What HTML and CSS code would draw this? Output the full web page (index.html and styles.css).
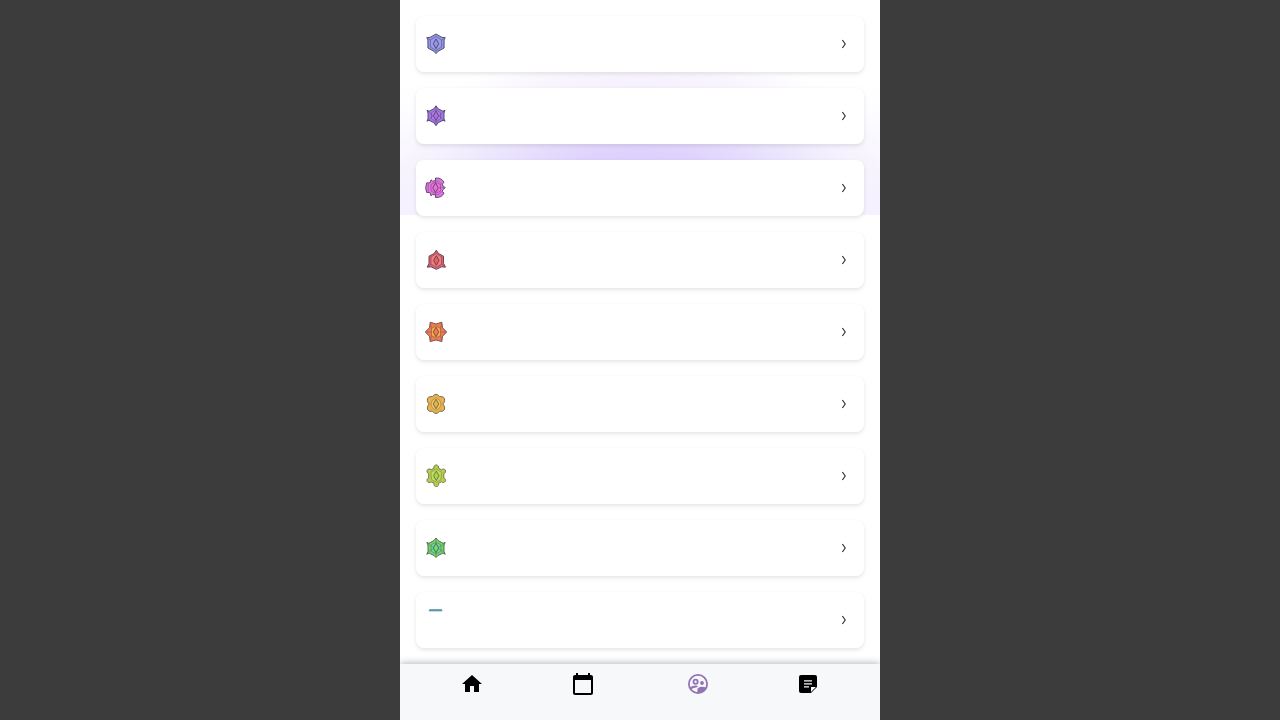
FILE: index.html
```html
<!DOCTYPE html>
<html lang="en">
<head>
<meta charset="utf-8">
<title>Groups</title>
<link rel="stylesheet" href="styles.css">
</head>
<body>
<svg width="0" height="0" class="defs"><defs>
<path id="chev" d="M2.4 2 5.2 6 2.4 10"/>
<g id="gem"><path d="M12 7 14.7 11.7 12 16.6 9.3 11.7Z"/></g>
</defs></svg>
<div class="app">
<main class="list">
<a class="card"><svg class="badge indigo" viewBox="0 0 24 24"><path d="M12 2 18 5.4 21.2 5.5 20.1 8V16L14 19.3 12 21.6 10 19.3 3.9 16V8L2.8 5.5 6 5.4Z"/><path class="center" d="M12 4.7 17.5 8V15L12 18.3 6.5 15V8Z"/><path class="in" d="M4 6.5 6.5 8M20 6.5 17.5 8M12 18.3V20"/><use href="#gem"/></svg><svg class="chevron" viewBox="0 0 8 12"><use href="#chev"/></svg></a>
<a class="card"><svg class="badge violet" viewBox="0 0 24 24"><path d="M12 1.8 14 4.7 19 7.2 21 6.2 20 9V14.4L21 17.2 19 16.3 14 18.8 12 21.7 10 18.8 5 16.3 3 17.2 4 14.4V9L3 6.2 5 7.2 10 4.7Z"/><path class="center" d="M12 5.5 16.5 9V14.5L12 18 7.5 14.5V9Z"/><path class="in" d="M12 2V7M12 16.6V21M4 7 9.3 11.7 4 16.5M20 7 14.7 11.7 20 16.5"/><use href="#gem"/></svg><svg class="chevron" viewBox="0 0 8 12"><use href="#chev"/></svg></a>
<a class="card"><svg class="badge pink" viewBox="0 0 24 24"><path d="M11.5 4.5V2Q18 1.7 20 6.5L18.2 8 19 10 21.3 11.7 19 13.5 18.2 15.5 20 17Q18 21.8 11.5 21.5V19L8.7 18.4 7 19.8 6 16.6 2.7 16.5Q.6 11.8 2.7 6.9L6 6.8 7 3.8 8.7 5.2Z"/><path class="center" d="M11.5 6 16.5 8.5V15L11.5 17.5 7 15V8.5Z"/><path class="in" d="M11.5 4.5V7M11.5 17V19M4.2 8V15.5M11.5 4.5Q15 4.5 18 8M11.5 19Q15 19 18 15.5M15 11.7H20"/><use href="#gem" x="-.5"/></svg><svg class="chevron" viewBox="0 0 8 12"><use href="#chev"/></svg></a>
<a class="card"><svg class="badge red" viewBox="0 0 24 24"><path d="M12.3 2.2 14.5 5.5 19.5 8.2V15.3L21.5 19.2 17.7 18.8 12.3 21.3 7 18.8 3.2 19.2 5 15.3V8.2L10.1 5.5Z"/><path class="center" d="M12.3 5.5 17.5 9V16L12.3 19.2 7 16V9Z"/><path class="in" d="M7 16 4 18.5M17.5 16 20.5 18.5"/><use href="#gem" x=".3" y=".7"/></svg><svg class="chevron" viewBox="0 0 8 12"><use href="#chev"/></svg></a>
<a class="card"><svg class="badge orange" viewBox="0 0 24 24"><path d="M12 4 17.8 2.2 18.5 7.8 22.8 12 18.5 16.2 17.8 21.6 12 20 6.2 21.6 5.5 16.2 1.2 12 5.5 7.8 6.2 2.2Z"/><path class="center" d="M12 6 16.5 8.5V15.5L12 18 7.5 15.5V8.5Z"/><path class="in" d="M7.5 8.5 6.5 3.5M16.5 8.5 17.5 3.5M7.5 15.5 6.5 20.5M16.5 15.5 17.5 20.5M7.5 12H2M16.5 12H22"/><use href="#gem" y=".2"/></svg><svg class="chevron" viewBox="0 0 8 12"><use href="#chev"/></svg></a>
<a class="card"><svg class="badge gold" viewBox="0 0 24 24"><path d="M8.5 4.5Q12 0 15.5 4.5 21 4.2 20.7 8.5 20.5 10.5 18.8 12 21.5 14.5 20.5 17.5 19 20.2 15.5 19.2 12 24 8.5 19.2 5 20.2 3.5 17.5 2.5 14.5 5.2 12 3.5 10.5 3.3 8.5 3 4.2 8.5 4.5Z"/><path class="center" d="M12 5.5Q7 8 7 12T12 18.5Q17 16 17 12T12 5.5"/><use href="#gem" y=".2"/></svg><svg class="chevron" viewBox="0 0 8 12"><use href="#chev"/></svg></a>
<a class="card"><svg class="badge lime" viewBox="0 0 24 24"><path d="M10 4.2A2.4 2.4 0 1 1 14.5 4.2L17.5 5.8A2.3 2.3 0 1 1 19.8 9.5V14A2.3 2.3 0 1 1 17.5 17.7L14.5 19.3A2.4 2.4 0 1 1 10 19.3L7 17.7A2.3 2.3 0 1 1 4.7 14V9.5A2.3 2.3 0 1 1 7 5.8Z"/><path class="center" d="M12.3 5.2 17.5 8 17 15.5 12.3 18.3 7.5 15.5 7 8Z"/><use href="#gem" x=".3"/></svg><svg class="chevron" viewBox="0 0 8 12"><use href="#chev"/></svg></a>
<a class="card"><svg class="badge green" viewBox="0 0 24 24"><path d="M12 2 14 4.5 19 7.3 21.2 6.5 20 9V15.5L21.2 18.3 19 17 14 19.5 12 21.5 10 19.5 5 17 2.8 18.3 4 15.5V9L2.8 6.5 5 7.3 10 4.5Z"/><path class="center" d="M12 6 17 9V15L12 18 7 15V9Z"/><path class="in" d="M12 3V7M12 17V21M4 8 9 11M20 8 15 11M4 16 9 13M20 16 15 13"/><use href="#gem" y=".2"/></svg><svg class="chevron" viewBox="0 0 8 12"><use href="#chev"/></svg></a>
<a class="card"><svg class="badge teal" viewBox="0 0 24 24"><path d="M5.5 1.8H17.7L18 2.8H5.2Z"/></svg><svg class="chevron" viewBox="0 0 8 12"><use href="#chev"/></svg></a>
</main>
<nav class="tabs">
<a class="tab"><svg viewBox="0 0 24 24"><path d="M10 20v-6h4v6h5v-8h3L12 3 2 12h3v8z"/></svg></a>
<a class="tab"><svg viewBox="0 0 24 24"><path d="M20 3h-1V1h-2v2H7V1H5v2H4c-1.1 0-2 .9-2 2v16c0 1.1.9 2 2 2h16c1.1 0 2-.9 2-2V5c0-1.1-.9-2-2-2zm0 18H4V8h16v13z"/></svg></a>
<a class="tab active"><svg viewBox="0 0 24 24"><circle class="ring" cx="12" cy="12" r="9.1"/><circle class="ring" cx="9.6" cy="9.7" r="2.1"/><circle cx="16" cy="11" r="1.9"/><path d="M4 15.2Q6.3 13.6 9.8 13.6L12.3 14.1Q11 14.7 10.4 15.6 7.2 15.5 5.4 17.3ZM11.4 21V17.5Q12 14.7 16 14.7 18.5 14.7 20.4 16 18.3 21.2 11.4 21Z"/></svg></a>
<a class="tab"><svg viewBox="0 0 24 24"><path d="M5 3H19Q21 3 21 5V15L15 21H5Q3 21 3 19V5Q3 3 5 3Z"/><path class="fold" d="M15 19.9V15H19.9Z"/><path class="lines" d="M8 8.9H16M8 11.9H16M8 14.9H13"/></svg></a>
</nav>
</div>
</body>
</html>
```
FILE: styles.css
```css
body { margin: 0; background: #3c3c3c; overflow: hidden; font-family: Roboto, sans-serif; }
.defs { display: block; }
.app {
  width: 480px; height: 720px; margin: 0 auto;
  display: flex; flex-direction: column;
  background:
    radial-gradient(265px 155px at 240px 215px, #d2c2fb 0%, #dfd3fd 42%, #e9e2fd 62%, #f6f1fe 85%, rgba(255,255,255,0) 108%) 0 0 / 480px 215px no-repeat,
    linear-gradient(#fff 80px, #fafaff 155px, #f2f1fe 215px) 0 0 / 480px 215px no-repeat,
    #fff;
}
.list { flex: 1; padding: 16px 16px 0; display: flex; flex-direction: column; gap: 16px; box-sizing: border-box; }
.card {
  height: 56px; padding: 0 16px 0 8px; box-sizing: border-box;
  display: flex; align-items: center; justify-content: space-between;
  background: #fff; border-radius: 8px; box-shadow: 0 2px 4px rgba(0,0,0,.1);
}
.badge { width: 24px; height: 24px; stroke: #4c4b70; stroke-width: .95; stroke-linejoin: round; }
.badge .in { fill: none; stroke-width: .6; opacity: .75; }
.badge .center { stroke-width: .5; }
.chevron { width: 8px; height: 12px; fill: none; stroke: #333338; stroke-width: 1.2; }
.indigo { fill: #8f97e0; }
.indigo .center { fill: #a298f2; }
.violet { fill: #a873e6; }
.violet .center { fill: #c27af0; }
.pink { fill: #dc78e6; stroke: #69406c; }
.pink .center { fill: #ef70cf; }
.red { fill: #e0607a; stroke: #67404f; }
.red .center { fill: #f47e72; }
.orange { fill: #f07c4c; stroke: #784a55; }
.orange .center { fill: #f6ae48; }
.gold { fill: #eab04c; stroke: #74664e; }
.gold .center { fill: #eccb5c; }
.lime { fill: #bccb4c; stroke: #6b764b; }
.lime .center { fill: #b4e25c; }
.green { fill: #7fd468; stroke: #43694e; }
.green .center { fill: #68dda8; }
.teal { fill: #48bdd0; stroke: #4c8794; }
.tabs {
  height: 56px; padding-top: 8px; box-sizing: border-box;
  display: grid; grid-template-columns: 144px 78px 152px 68px; justify-items: center; align-items: start;
  background: #f6f8fa; box-shadow: 0 0 8px rgba(0,0,0,.35); clip-path: inset(-12px 0 0);
}
.tab { display: flex; }
.tab svg { width: 24px; height: 24px; }
.active { color: #9273b5; }
.active svg { fill: currentColor; }
.active .ring { fill: none; stroke: currentColor; stroke-width: 1.8; }
.fold { fill: #f6f8fa; }
.lines { fill: none; stroke: #f6f8fa; stroke-width: 1.4; }
```
